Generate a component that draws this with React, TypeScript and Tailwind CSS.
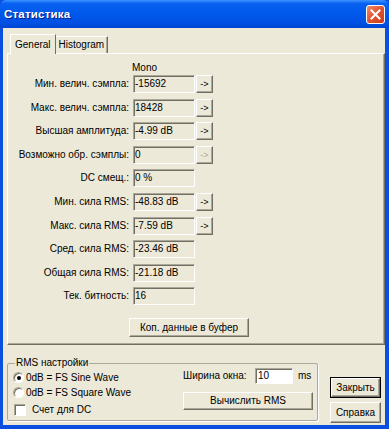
import React from "react";

const rows: { label: string; value: string; arrow?: "on" | "off" }[] = [
  { label: "Мин. велич. сэмпла:", value: "-15692", arrow: "on" },
  { label: "Макс. велич. сэмпла:", value: "18428", arrow: "on" },
  { label: "Высшая амплитуда:", value: "-4.99 dB", arrow: "on" },
  { label: "Возможно обр. сэмплы:", value: "0", arrow: "off" },
  { label: "DC смещ.:", value: "0 %" },
  { label: "Мин. сила RMS:", value: "-48.83 dB", arrow: "on" },
  { label: "Макс. сила RMS:", value: "-7.59 dB", arrow: "on" },
  { label: "Сред. сила RMS:", value: "-23.46 dB" },
  { label: "Общая сила RMS:", value: "-21.18 dB" },
  { label: "Тек. битность:", value: "16" },
];

// классические 3D рамки
const raised =
  "border border-t-white border-l-white border-r-[#716F64] border-b-[#716F64] shadow-[inset_-1px_-1px_0_#ACA899] bg-[#ECE9D8]";
const sunken =
  "border border-t-[#ACA899] border-l-[#ACA899] border-r-white border-b-white shadow-[inset_1px_1px_0_#716F64]";

function StatRow({ label, value, arrow }: { label: string; value: string; arrow?: "on" | "off" }) {
  return (
    <div className="flex items-center h-[18px]">
      <div className="w-[122px] text-right whitespace-nowrap pr-[1px]">{label}</div>
      <div className={`ml-[3px] w-[62px] h-[18px] flex items-center pl-[1px] ${sunken}`}>{value}</div>
      {arrow && (
        <div
          className={`ml-[1px] w-[17px] h-[18px] flex items-center justify-center text-[9px] ${raised} ${
            arrow === "off" ? "text-[#ACA899]" : "text-black"
          }`}
        >
          -&gt;
        </div>
      )}
    </div>
  );
}

function Radio({ checked, label }: { checked?: boolean; label: string }) {
  return (
    <div className="flex items-center h-[15px]">
      <div className="ml-[5px] w-[11px] h-[11px] rounded-full bg-white border border-t-[#ACA899] border-l-[#ACA899] border-r-white border-b-white shadow-[inset_1px_1px_0_#716F64] flex items-center justify-center">
        {checked && <div className="w-[4px] h-[4px] rounded-full bg-black" />}
      </div>
      <span className="ml-[2px]">{label}</span>
    </div>
  );
}

export default function App() {
  return (
    <div className="w-[389px] h-[429px] bg-[#0A4FE0] flex flex-col font-['Liberation_Sans',Arial,sans-serif] text-[10px] text-black leading-[12px] overflow-hidden">
      {/* заголовок окна */}
      <div className="h-[28px] shrink-0 flex items-center justify-between pl-[4px] pr-[4px] bg-[linear-gradient(180deg,#3D95FF_0%,#0A62F2_12%,#0058EB_50%,#0050E2_85%,#0043CF_100%)] rounded-t-[6px]">
        <span className="text-white font-bold text-[11.5px] tracking-[0.2px] [text-shadow:1px_1px_0_#0A1A8A]">
          Статистика
        </span>
        <div className="w-[19px] h-[19px] rounded-[3px] border border-white bg-[linear-gradient(135deg,#F08A6A_0%,#E1532F_50%,#C8391A_100%)] flex items-center justify-center">
          <svg width="11" height="11" viewBox="0 0 11 11">
            <path d="M1.5 1.5 L9.5 9.5 M9.5 1.5 L1.5 9.5" stroke="white" strokeWidth="2" strokeLinecap="square" />
          </svg>
        </div>
      </div>

      <div className="flex-1 mx-[3px] mr-[4px] mb-[4px] bg-[#ECE9D8] flex flex-col pt-[5px]">
        {/* вкладки */}
        <div className="flex items-end ml-[7px] h-[20px] relative z-10">
          <div className="h-[20px] -mb-[1px] px-[4px] bg-[#ECE9D8] border border-t-white border-l-white border-b-0 border-r-[#716F64] flex items-start pt-[4px]">
            General
          </div>
          <div className="h-[17px] px-[3px] border border-t-white border-l-0 border-b-0 border-r-[#716F64] shadow-[inset_-1px_0_0_#ACA899] flex items-start pt-[2px]">
            Histogram
          </div>
        </div>

        {/* панель General */}
        <div className="ml-[4px] h-[292px] border border-t-white border-l-white border-r-[#716F64] border-b-[#716F64] shadow-[inset_-1px_-1px_0_#ACA899] flex flex-col">
          <div className="pl-[124px] pt-[8px] h-[20px]">Mono</div>
          <div className="flex flex-col gap-[5.6px] mt-[1px]">
            {rows.map((r) => (
              <StatRow key={r.label} {...r} />
            ))}
          </div>
          <div className={`mt-[13px] ml-[121px] w-[120px] h-[19px] flex items-center justify-center ${raised}`}>
            Коп. данные в буфер
          </div>
        </div>

        {/* нижняя часть */}
        <div className="flex items-start">
          <fieldset className="ml-[4px] mt-[12px] w-[311px] h-[64px] border border-[#ACA899] rounded-[2px] shadow-[1px_1px_0_white] p-0 m-0">
            <legend className="ml-[7px] px-[1px] leading-[12px]">RMS настройки</legend>
            <div className="flex">
              <div className="flex flex-col pt-[1px]">
                <Radio checked label="0dB = FS Sine Wave" />
                <Radio label="0dB = FS Square Wave" />
                <div className="flex items-center h-[17px] mt-[1px]">
                  <div className="ml-[6px] w-[12px] h-[12px] bg-white border border-t-[#ACA899] border-l-[#ACA899] border-r-white border-b-white shadow-[inset_1px_1px_0_#716F64]" />
                  <span className="ml-[6px]">Счет для DC</span>
                </div>
              </div>
              <div className="ml-auto mr-[4px] w-[130px] flex flex-col -mt-[1px]">
                <div className="flex items-center h-[16px] whitespace-nowrap">
                  <span className="w-[72px] shrink-0">Ширина окна:</span>
                  <div className="w-[38px] shrink-0 h-[16px] bg-white border border-t-[#ACA899] border-l-[#ACA899] border-r-white border-b-white shadow-[inset_1px_1px_0_#716F64] pl-[2px] flex items-center">
                    10
                  </div>
                  <span className="ml-[5px]">ms</span>
                </div>
                <div className={`mt-[8px] w-[130px] h-[18px] flex items-center justify-center ${raised}`}>
                  Вычислить RMS
                </div>
              </div>
            </div>
          </fieldset>
          <div className="ml-[12px] mt-[32px] flex flex-col gap-[4px]">
            <div className="w-[51px] h-[21px] border border-black flex">
              <div className={`flex-1 flex items-center justify-center ${raised}`}>Закрыть</div>
            </div>
            <div className={`w-[51px] h-[21px] flex items-center justify-center ${raised}`}>Справка</div>
          </div>
        </div>
      </div>
    </div>
  );
}
